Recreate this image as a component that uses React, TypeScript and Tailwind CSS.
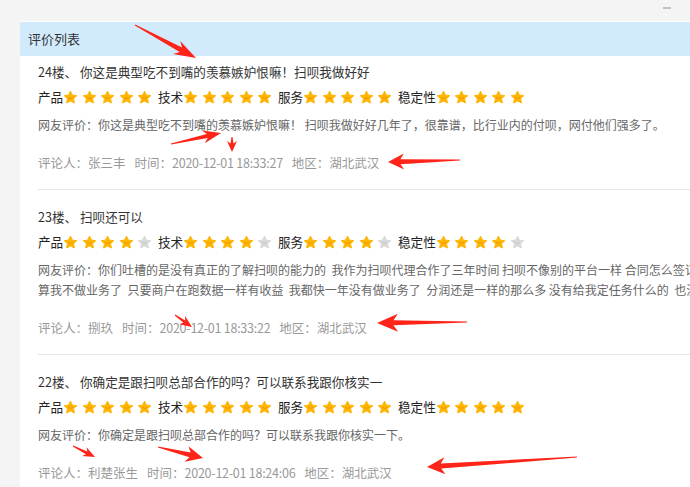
import React from "react";

type Pt = [number, number];

function arrowPoints(a: Pt, b: Pt, headLen: number, headW: number, shaftW: number, tailW = 1): string {
  const dx = b[0] - a[0];
  const dy = b[1] - a[1];
  const L = Math.hypot(dx, dy);
  const ux = dx / L;
  const uy = dy / L;
  const nx = -uy;
  const ny = ux;
  const neckX = b[0] - ux * headLen * 0.78;
  const neckY = b[1] - uy * headLen * 0.78;
  const barbX = b[0] - ux * headLen;
  const barbY = b[1] - uy * headLen;
  const pts: Pt[] = [
    [a[0] + nx * tailW / 2, a[1] + ny * tailW / 2],
    [neckX + nx * shaftW / 2, neckY + ny * shaftW / 2],
    [barbX + nx * headW / 2, barbY + ny * headW / 2],
    [b[0], b[1]],
    [barbX - nx * headW / 2, barbY - ny * headW / 2],
    [neckX - nx * shaftW / 2, neckY - ny * shaftW / 2],
    [a[0] - nx * tailW / 2, a[1] - ny * tailW / 2],
  ];
  return pts.map((p) => `${p[0].toFixed(1)},${p[1].toFixed(1)}`).join(" ");
}

const arrows: { a: Pt; b: Pt; h: number; w: number; s: number }[] = [
  { a: [135, 25], b: [196, 58], h: 22, w: 15, s: 5 },
  { a: [171, 144], b: [221, 133], h: 18, w: 13, s: 4 },
  { a: [232, 137], b: [232, 152], h: 11, w: 10, s: 3 },
  { a: [460, 160], b: [388, 162], h: 16, w: 16, s: 5 },
  { a: [175, 315], b: [192, 327], h: 12, w: 10, s: 3 },
  { a: [467, 322], b: [377, 323], h: 21, w: 18, s: 5 },
  { a: [73, 446], b: [95, 457], h: 12, w: 10, s: 3 },
  { a: [158, 447], b: [203, 458], h: 17, w: 16, s: 5 },
  { a: [577, 457], b: [427, 467], h: 18, w: 17, s: 5 },
];

function Star({ on }: { on: boolean }) {
  return (
    <span className="flex h-[15px] w-[18.5px] shrink-0 items-center">
      <svg viewBox="0 0 24 24" width="15" height="15">
        <path
          d="M12 1.8l3.05 6.4 7 .85-5.15 4.85 1.35 6.95L12 17.4l-6.25 3.45 1.35-6.95L1.95 9.05l7-.85z"
          fill={on ? "#ffb400" : "#d9d9d9"}
          stroke={on ? "#ffb400" : "#d9d9d9"}
          strokeWidth="1.6"
          strokeLinejoin="round"
        />
        <path
          d="M8.6 12.2 Q12 15.4 15.4 12.2"
          fill="none"
          stroke={on ? "#e39200" : "#c4c4c4"}
          strokeWidth="1.4"
          strokeLinecap="round"
        />
      </svg>
    </span>
  );
}

function Rating({ label, n }: { label: string; n: number }) {
  return (
    <div className="mr-[2.3px] flex items-center">
      <span>{label}</span>
      {[0, 1, 2, 3, 4].map((i) => (
        <Star key={i} on={i < n} />
      ))}
    </div>
  );
}

type Item = {
  title: string;
  stars: number;
  comment: string[];
  name: string;
  time: string;
};

const items: Item[] = [
  {
    title: "24楼、 你这是典型吃不到嘴的羡慕嫉妒恨嘛！扫呗我做好好",
    stars: 5,
    comment: ["网友评价：你这是典型吃不到嘴的羡慕嫉妒恨嘛！ 扫呗我做好好几年了，很靠谱，比行业内的付呗，网付他们强多了。"],
    name: "张三丰",
    time: "2020-12-01 18:33:27",
  },
  {
    title: "23楼、 扫呗还可以",
    stars: 4,
    comment: [
      "网友评价：你们吐槽的是没有真正的了解扫呗的能力的  我作为扫呗代理合作了三年时间 扫呗不像别的平台一样 合同怎么签订了就是怎么执行 就",
      "算我不做业务了  只要商户在跑数据一样有收益  我都快一年没有做业务了  分润还是一样的那么多 没有给我定任务什么的  也没有扣我的钱",
    ],
    name: "捌玖",
    time: "2020-12-01 18:33:22",
  },
  {
    title: "22楼、 你确定是跟扫呗总部合作的吗？可以联系我跟你核实一",
    stars: 5,
    comment: ["网友评价：你确定是跟扫呗总部合作的吗？可以联系我跟你核实一下。"],
    name: "利楚张生",
    time: "2020-12-01 18:24:06",
  },
];

export default function App() {
  return (
    <div className="relative h-[487px] w-[690px] overflow-hidden bg-[#f4f4f4] font-['Noto_Sans_CJK_SC','Microsoft_YaHei',sans-serif]">
      <div className="absolute left-[663px] top-[7px] h-[2px] w-[8px] bg-[#c2c2c2]" />
      <div className="ml-[20px] w-[800px] pt-[21px]">
        <div className="border-t border-white bg-white">
          <div className="flex h-[34px] items-center bg-[#d1ebfd] pl-[8px] text-[13px] text-[#333]">
            评价列表
          </div>
          <div className="ml-[18px]">
            {items.map((it, idx) => (
              <div
                key={idx}
                className={`border-b border-[#e6e6ec] pb-[13px] ${idx === 0 ? "pt-[3px]" : "pt-[14px]"}`}
              >
                <div className="flex h-[26px] items-center whitespace-pre text-[12.6px] text-[#333]">
                  {it.title}
                </div>
                <div className="flex h-[25px] items-center text-[12.6px] text-[#222]">
                  <Rating label="产品" n={it.stars} />
                  <Rating label="技术" n={it.stars} />
                  <Rating label="服务" n={it.stars} />
                  <Rating label="稳定性" n={it.stars} />
                </div>
                <div className="mt-[5px] text-[12px] leading-[20px] text-[#666]">
                  {it.comment.map((c, i) => (
                    <div key={i} className="whitespace-pre">
                      {c}
                    </div>
                  ))}
                </div>
                <div className="mt-[15px] flex h-[26px] items-center gap-[9px] text-[12.5px] text-[#999]">
                  <span>评论人：{it.name}</span>
                  <span>
                    时间：<span className="tracking-[-0.25px]">{it.time}</span>
                  </span>
                  <span>地区：湖北武汉</span>
                </div>
              </div>
            ))}
          </div>
        </div>
      </div>
      <svg className="pointer-events-none absolute left-0 top-0" width="690" height="487">
        {arrows.map((ar, i) => (
          <polygon key={i} points={arrowPoints(ar.a, ar.b, ar.h, ar.w, ar.s)} fill="#ff2418" />
        ))}
      </svg>
    </div>
  );
}
